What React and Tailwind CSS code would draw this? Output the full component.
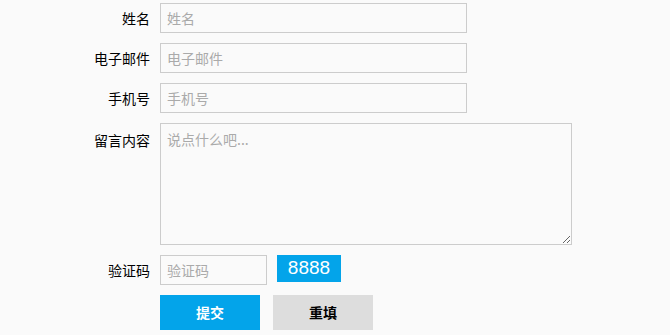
export default function App() {
  const font = { fontFamily: '"Microsoft YaHei", "Noto Sans CJK SC", "Noto Sans", sans-serif' };
  const labelCls = "w-[150px] shrink-0 text-right text-[14px] leading-[30px] text-black";
  const inputCls =
    "ml-[10px] h-[30px] border border-[#cccccc] bg-transparent px-[6px] text-[14px] text-[#333] placeholder:text-[#aaaaaa] outline-none";
  return (
    <div className="min-h-[335px] w-[670px] bg-[#fafafa] pt-[3px]" style={font}>
      <div className="flex flex-col gap-[10px]">
        <div className="flex">
          <label className={labelCls}>姓名</label>
          <input className={`${inputCls} w-[307px]`} placeholder="姓名" />
        </div>
        <div className="flex">
          <label className={labelCls}>电子邮件</label>
          <input className={`${inputCls} w-[307px]`} placeholder="电子邮件" />
        </div>
        <div className="flex">
          <label className={labelCls}>手机号</label>
          <input className={`${inputCls} w-[307px]`} placeholder="手机号" />
        </div>
        <div className="flex">
          <label className={`${labelCls} pt-[2px]`}>留言内容</label>
          <textarea
            className="ml-[10px] block h-[122px] w-[412px] resize-y border border-[#cccccc] bg-transparent px-[6px] py-[5px] text-[14px] leading-5 text-[#333] placeholder:text-[#aaaaaa] outline-none"
            placeholder="说点什么吧..."
          />
        </div>
        <div className="flex items-start">
          <label className={labelCls}>验证码</label>
          <input className={`${inputCls} w-[107px]`} placeholder="验证码" />
          <div
            className="ml-[10px] flex h-[27px] w-[64px] items-center justify-center bg-[#03a4ea] text-[19px] text-white"
            style={{ fontFamily: '"Liberation Sans", Arial, sans-serif' }}
          >
            8888
          </div>
        </div>
        <div className="flex">
          <div className="w-[150px] shrink-0" />
          <button className="ml-[10px] h-[35px] w-[100px] bg-[#03a4ea] text-[14px] font-bold text-white">提交</button>
          <button className="ml-[13px] h-[35px] w-[100px] bg-[#dddddd] text-[14px] font-bold text-black">重填</button>
        </div>
      </div>
    </div>
  );
}
